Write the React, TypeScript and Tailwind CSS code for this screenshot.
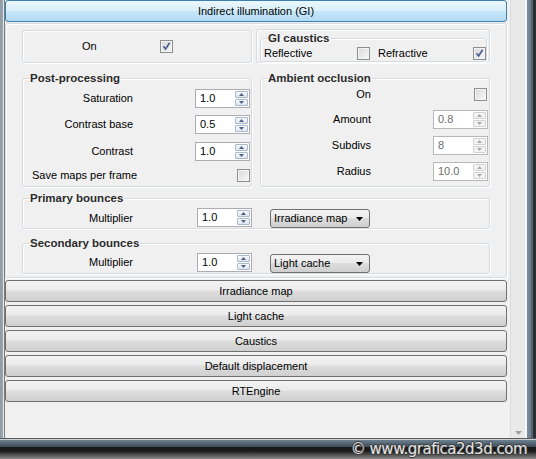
import React from 'react';

// 3ds Max / V-Ray style rollout panel
const font = "font-['Liberation_Sans',Arial,sans-serif]";
const btnGrad = 'bg-[linear-gradient(#f3f3f3,#ebebeb_45%,#dddddd_50%,#cfcfcf)]';
const groupBorder = 'border border-[#d5dbe0] rounded-[3px] shadow-[inset_1px_1px_0_#fff,1px_1px_0_#fff]';

function Check({ checked }: { checked?: boolean }) {
  return (
    <div className="w-[13px] h-[13px] shrink-0 border border-[#8e8f8f] bg-[linear-gradient(135deg,#d8d8d8,#f9f9f9)] shadow-[inset_0_0_0_1px_#f4f4f4] flex items-center justify-center">
      {checked && (
        <svg width="9" height="9" viewBox="0 0 9 9">
          <path d="M1.5 4.2 L3.6 7 L7.6 0.8" stroke="#4a5f97" strokeWidth="1.7" fill="none" />
        </svg>
      )}
    </div>
  );
}

function SpinBtn({ up, disabled }: { up?: boolean; disabled?: boolean }) {
  return (
    <div
      className={`flex-1 flex items-center justify-center border rounded-[1px] ${
        disabled ? 'border-[#d2d2d2] bg-[#f4f4f4]' : 'border-[#a9bace] bg-[linear-gradient(#f7f9fc,#dfe6ee)]'
      }`}
    >
      <svg width="5" height="3" viewBox="0 0 5 3">
        <path d={up ? 'M0 3L2.5 0L5 3Z' : 'M0 0L5 0L2.5 3Z'} fill={disabled ? '#a9a9a9' : '#4d6185'} />
      </svg>
    </div>
  );
}

function Spinner({ value, disabled }: { value: string; disabled?: boolean }) {
  return (
    <div className={`h-[19px] w-[55px] shrink-0 flex border bg-white ${disabled ? 'border-[#b8b8b8]' : 'border-[#abadb3]'}`}>
      <div className={`flex-1 pl-[4px] leading-[17px] ${disabled ? 'text-[#6d6d6d]' : 'text-black'}`}>{value}</div>
      <div className="w-[14px] flex flex-col gap-px py-px pr-px">
        <SpinBtn up disabled={disabled} />
        <SpinBtn disabled={disabled} />
      </div>
    </div>
  );
}

function Dropdown({ label }: { label: string }) {
  return (
    <div className={`w-[100px] h-[19px] ml-[18px] mt-px flex items-center border border-[#707070] rounded-[3px] pl-[3px] pr-[6px] ${btnGrad}`}>
      <span className="flex-1">{label}</span>
      <svg width="7" height="4" viewBox="0 0 7 4">
        <path d="M0 0H7L3.5 4Z" fill="#000" />
      </svg>
    </div>
  );
}

function Group({ title, className, children }: { title: string; className?: string; children?: React.ReactNode }) {
  return (
    <fieldset className={`${groupBorder} ${className ?? ''}`}>
      <legend className="ml-[6px] px-px text-[11.5px] font-bold leading-[13px] text-[#2b2b2b]">{title}</legend>
      {children}
    </fieldset>
  );
}

function Row({ label, children, className }: { label: string; children: React.ReactNode; className?: string }) {
  return (
    <div className={`h-[19px] flex items-center ${className ?? ''}`}>
      <div className="w-[110px] text-right">{label}</div>
      {children}
    </div>
  );
}

const rollouts = ['Irradiance map', 'Light cache', 'Caustics', 'Default displacement', 'RTEngine'];

export default function App() {
  return (
    <div className={`w-[536px] h-[459px] relative overflow-hidden bg-[#f0f0f0] text-[11px] text-black ${font}`}>
      <div className="flex h-[438px]">
        {/* left window frame */}
        <div className="w-[5px] bg-[linear-gradient(to_right,#8d99a3_0,#9ea9b2_3px,#e6e6e6_3px,#e6e6e6_4px,#7a7a7a_4px)]" />

        <div className="w-[502px] flex flex-col">
          {/* open rollout header */}
          <div className="h-[22px] flex items-center justify-center border border-[#3c7fb1] rounded-[3px] bg-[linear-gradient(#eaf6fd,#d9f0fc_50%,#c6e7fa_52%,#b2dbf3)]">
            Indirect illumination (GI)
          </div>

          {/* rollout body */}
          <div className={`mt-px h-[255px] ${groupBorder} px-[16px] pt-[5px]`}>
            <div className="flex gap-[4px] items-end">
              <div className={`w-[230px] h-[33px] ${groupBorder} flex items-center pl-[59px]`}>
                <span className="w-[78px]">On</span>
                <Check checked />
              </div>
              <div className={`w-[234px] h-[34px] ${groupBorder} pt-[2px] pl-[3px] pr-[2px]`}>
                <Group title="GI caustics" className="h-[30px]">
                  <div className="h-[16px] flex items-center pl-[3px]">
                    <span className="w-[93px]">Reflective</span>
                    <Check />
                    <span className="flex-1 ml-[8px]">Refractive</span>
                    <Check checked />
                  </div>
                </Group>
              </div>
            </div>

            <div className="flex gap-[8px] mt-[9px]">
              <Group title="Post-processing" className="w-[230px] h-[115px]">
                <Row label="Saturation" className="mt-[4px]">
                  <div className="ml-[62px]"><Spinner value="1.0" /></div>
                </Row>
                <Row label="Contrast base" className="mt-[7px]">
                  <div className="ml-[62px]"><Spinner value="0.5" /></div>
                </Row>
                <Row label="Contrast" className="mt-[8px]">
                  <div className="ml-[62px]"><Spinner value="1.0" /></div>
                </Row>
                <div className="h-[19px] mt-[5px] flex items-center justify-between pl-[9px] pr-px">
                  <span>Save maps per frame</span>
                  <Check />
                </div>
              </Group>
              <Group title="Ambient occlusion" className="w-[230px] h-[115px]">
                <Row label="On" className="pr-[2px]">
                  <div className="ml-auto"><Check /></div>
                </Row>
                <Row label="Amount" className="mt-[6px] pr-px">
                  <div className="ml-auto"><Spinner value="0.8" disabled /></div>
                </Row>
                <Row label="Subdivs" className="mt-[7px] pr-px">
                  <div className="ml-auto"><Spinner value="8" disabled /></div>
                </Row>
                <Row label="Radius" className="mt-[7px] pr-px">
                  <div className="ml-auto"><Spinner value="10.0" disabled /></div>
                </Row>
              </Group>
            </div>

            <Group title="Primary bounces" className="mt-[5px] h-[37px]">
              <div className="h-[20px] mt-[3px] flex items-start">
                <div className="w-[110px] text-right leading-[19px] mt-px">Multiplier</div>
                <div className="ml-[64px]"><Spinner value="1.0" /></div>
                <Dropdown label="Irradiance map" />
              </div>
            </Group>
            <Group title="Secondary bounces" className="mt-[8px] h-[37px]">
              <div className="h-[20px] mt-[3px] flex items-start">
                <div className="w-[110px] text-right leading-[19px]">Multiplier</div>
                <div className="ml-[64px]"><Spinner value="1.0" /></div>
                <Dropdown label="Light cache" />
              </div>
            </Group>
          </div>

          {/* closed rollouts */}
          <div className="mt-[2px] flex flex-col gap-[3px]">
            {rollouts.map((r) => (
              <div key={r} className={`h-[22px] flex items-center justify-center border border-[#707070] rounded-[3px] ${btnGrad}`}>
                {r}
              </div>
            ))}
          </div>
        </div>

        <div className="w-[3px]" />
        {/* scrollbar */}
        <div className="w-[17px] flex flex-col justify-end items-center pb-[3px] bg-[#e9e9e9] border-l border-[#dcdcdc] border-r-2 border-r-[#f7f7f7]">
          <svg width="7" height="4" viewBox="0 0 7 4">
            <path d="M0 0H7L3.5 4Z" fill="#a0a0a0" />
          </svg>
        </div>
        {/* right window frame */}
        <div className="w-[9px] bg-[linear-gradient(to_right,#7b8e9e_0,#6c7f8f_4px,#56636e_4px,#56636e_6px,#2b2f33_6px)]" />
      </div>

      {/* bottom window frame */}
      <div className="h-[21px] bg-[linear-gradient(#5a5a5a_0,#5a5a5a_1px,#c9d1d8_1px,#c9d1d8_2px,#6d8091_2px,#3d4b57_9px,#171717_9px,#1b1b1b_13px,#8c8c8c_21px)]" />

      {/* watermark */}
      <div className="absolute right-[9px] bottom-[1px] font-['DejaVu_Sans',Verdana,sans-serif] text-[15px] leading-[17px] tracking-[-0.5px] text-[#e4e4e4] [text-shadow:1px_0_0_#3a3a3a,-1px_0_0_#3a3a3a,0_1px_0_#3a3a3a,0_-1px_0_#3a3a3a]">
        © www.grafica2d3d.com
      </div>
    </div>
  );
}
